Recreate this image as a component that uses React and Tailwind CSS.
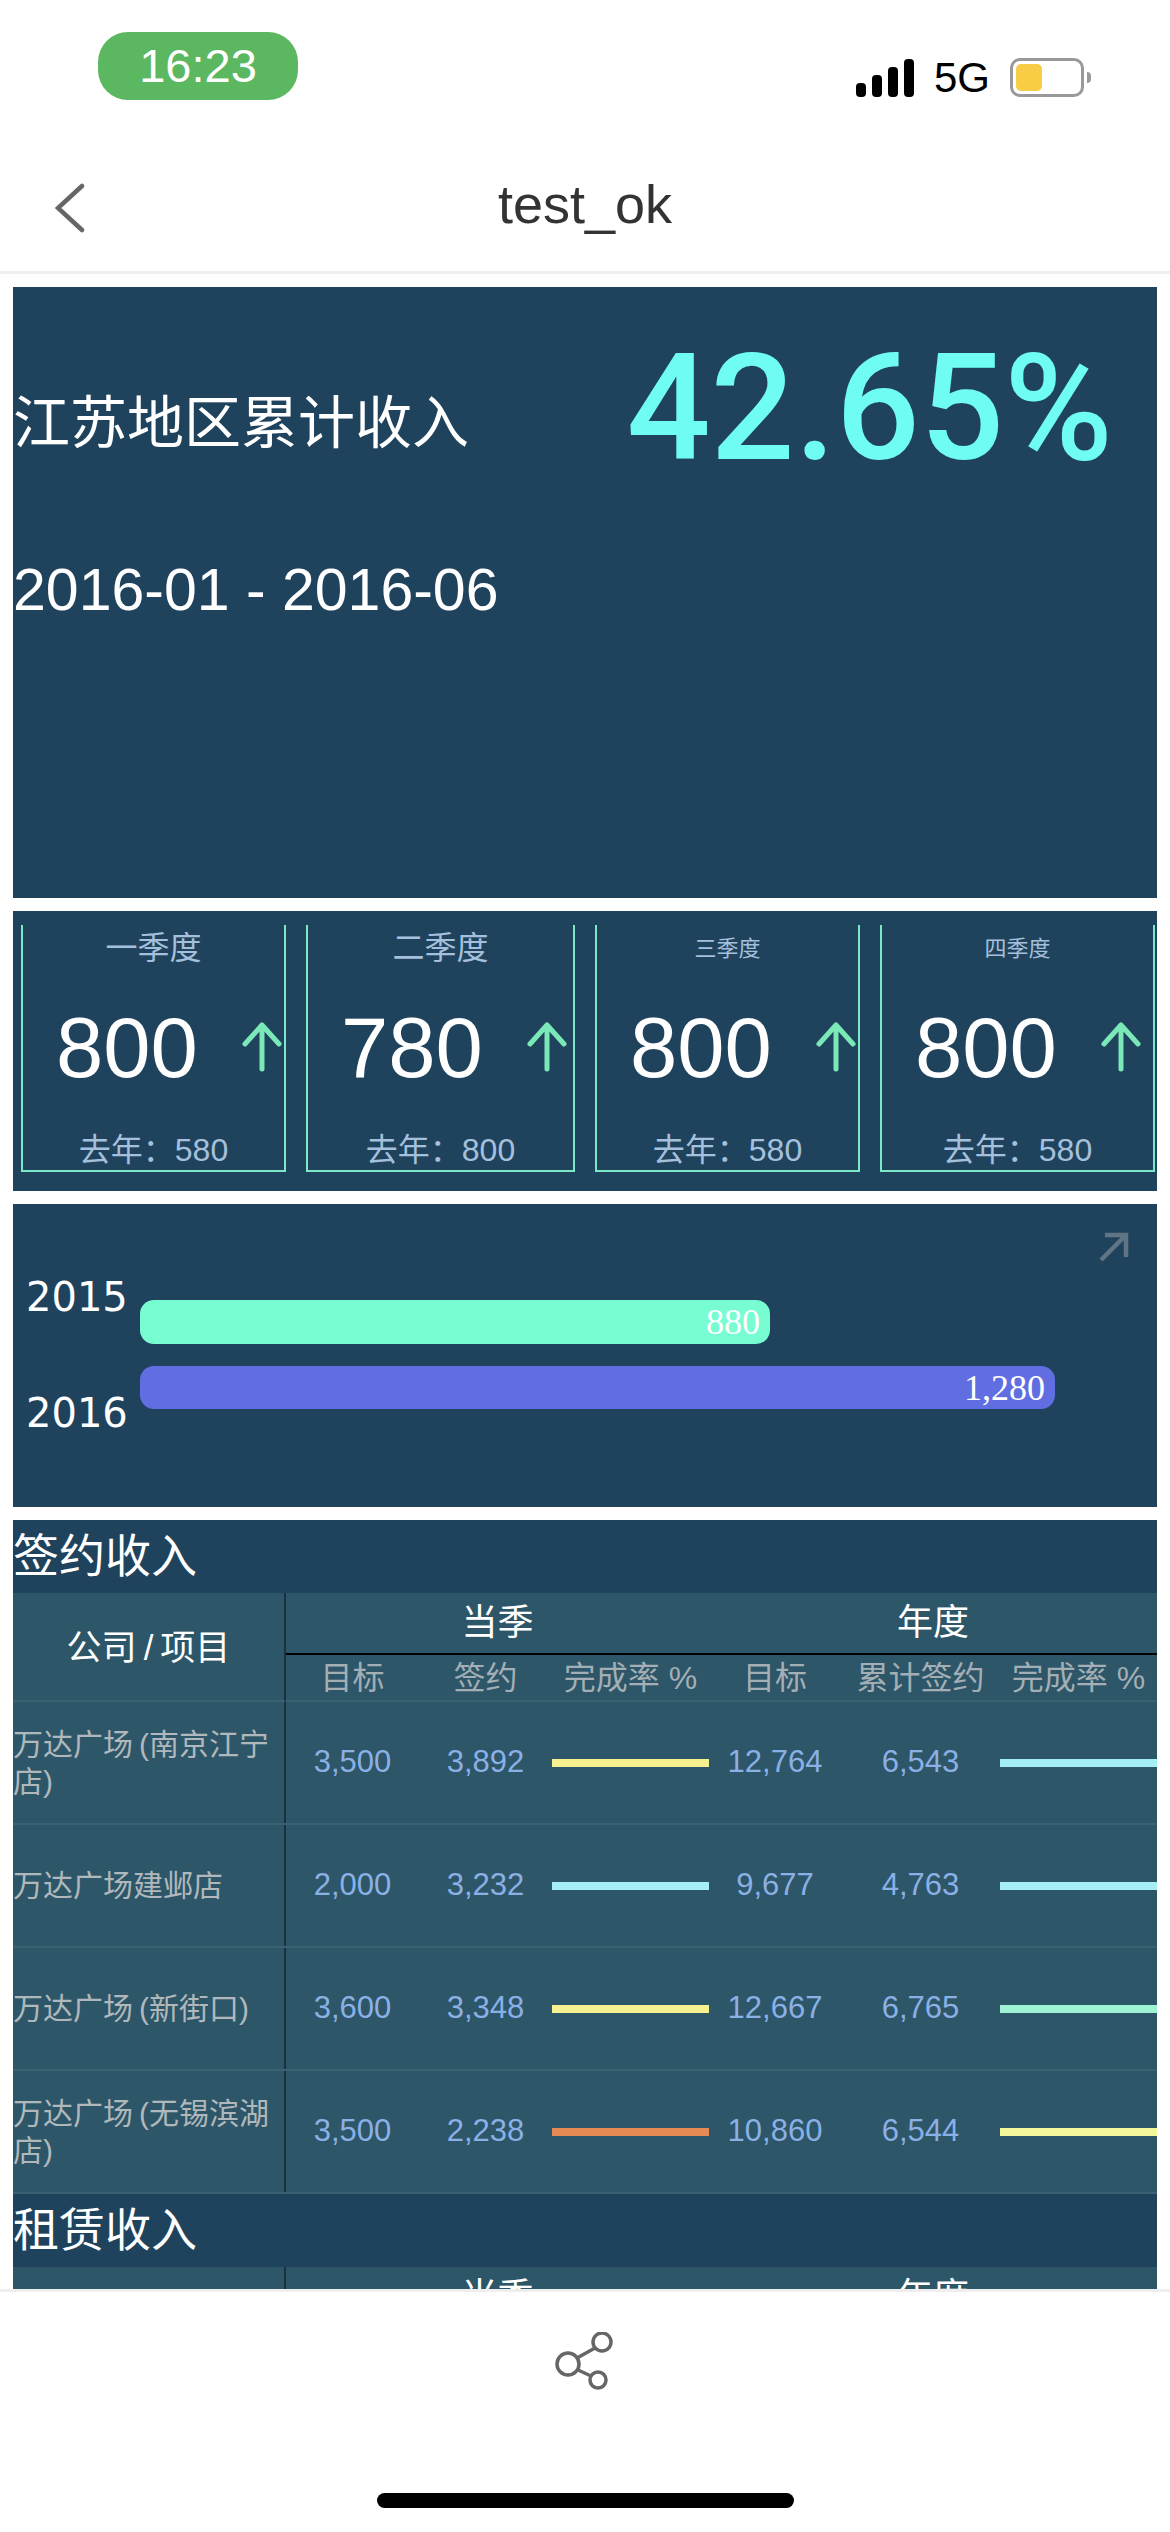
import React from 'react';

const cjk = 'font-["Liberation_Sans","Noto_Sans_CJK_SC",sans-serif]';

const quarters = [
    { name: '一季度', value: '800', last: '580', w: 'w-[265px]', small: false },
    { name: '二季度', value: '780', last: '800', w: 'w-[269px]', small: false },
    { name: '三季度', value: '800', last: '580', w: 'w-[265px]', small: true },
    { name: '四季度', value: '800', last: '580', w: 'w-[275px]', small: true },
];

const rows = [
    { name: '万达广场\u2009(南京江宁店)', a: '3,500', b: '3,892', barA: 'bg-[#f7f08f]', c: '12,764', d: '6,543', barB: 'bg-[#a5eef5]' },
    { name: '万达广场建邺店', a: '2,000', b: '3,232', barA: 'bg-[#a5eef5]', c: '9,677', d: '4,763', barB: 'bg-[#a5eef5]' },
    { name: '万达广场\u2009(新街口)', a: '3,600', b: '3,348', barA: 'bg-[#f7f08f]', c: '12,667', d: '6,765', barB: 'bg-[#a0f2d4]' },
    { name: '万达广场\u2009(无锡滨湖店)', a: '3,500', b: '2,238', barA: 'bg-[#e68a55]', c: '10,860', d: '6,544', barB: 'bg-[#f2f79a]' },
];

const gridCols = 'grid grid-cols-[273px_133px_133px_157px_132px_159px_157px]';

const TableHead = () => (
    <div className={`${gridCols} h-[109px] bg-[#2d5668]`}>
        <div className="row-span-2 flex items-center justify-center border-r-2 border-[#1c3140] border-b-2 border-b-[#3a6072] pt-[3px] text-[35px] text-white">
            公司<span className="mx-[7px]">/</span>项目
        </div>
        <div className="col-span-3 flex h-[62px] items-center justify-center border-b-2 border-black text-[36px] text-white">当季</div>
        <div className="col-span-3 flex h-[62px] items-center justify-center border-b-2 border-black text-[36px] text-white">年度</div>
        {['目标', '签约', '完成率 %', '目标', '累计签约', '完成率 %'].map((h, i) => (
            <div key={i} className="flex h-[47px] items-center justify-center border-b-2 border-[#3a6072] text-[32px] whitespace-nowrap text-[#a3aeb5]">
                {h}
            </div>
        ))}
    </div>
);

const SectionTitle = ({ children }) => (
    <div className="flex h-[73px] items-center text-[46px] text-white">{children}</div>
);

const UpArrow = () => (
    <svg width="40" height="50" viewBox="0 0 40 50" fill="none" stroke="#7be8b8" strokeWidth="5" strokeLinecap="round" strokeLinejoin="round">
        <path d="M20 47V3M3 22L20 3L37 22" />
    </svg>
);

export default function App() {
    return (
        <div className={`relative h-[2532px] w-[1170px] overflow-hidden bg-white ${cjk}`}>
            {/* status bar */}
            <div className="flex h-[150px] items-start pt-[32px] pr-[79px] pl-[98px]">
                <div className="flex h-[68px] w-[200px] items-center justify-center rounded-[30px] bg-[#5cb860] text-[47px] text-white">
                    16:23
                </div>
                <div className="mt-[26px] ml-auto flex items-center">
                    <svg width="58" height="38" viewBox="0 0 58 38">
                        <rect x="0" y="24" width="10" height="14" rx="4" fill="#000" />
                        <rect x="16" y="16" width="10" height="22" rx="4" fill="#000" />
                        <rect x="32" y="8" width="10" height="30" rx="4" fill="#000" />
                        <rect x="48" y="0" width="10" height="38" rx="4" fill="#000" />
                    </svg>
                    <span className="ml-[20px] text-[42px] leading-[38px] text-black">5G</span>
                    <div className="ml-[20px] h-[39px] w-[74px] rounded-[10px] border-[3px] border-[#999] p-[3px]">
                        <div className="h-full w-[26px] rounded-[5px] bg-[#f8cd45]" />
                    </div>
                    <div className="ml-[3px] h-[11px] w-[4px] rounded-r-full bg-[#999]" />
                </div>
            </div>

            {/* nav */}
            <div className="grid h-[124px] grid-cols-[1fr_auto_1fr] items-center border-b-[3px] border-[#eeeeee] pb-[6px] pl-[55px]">
                <svg width="30" height="50" viewBox="0 0 30 50" fill="none" stroke="#666" strokeWidth="4.5" strokeLinecap="round">
                    <path d="M27 3L3 25L27 47" />
                </svg>
                <span className="-mt-[8px] -ml-[55px] text-[54px] leading-[62px] text-[#333]">test_ok</span>
            </div>

            <div className="mx-[13px] mt-[13px] flex flex-col gap-[13px]">
                {/* headline */}
                <div className="flex h-[611px] items-start justify-between bg-[#20435d] pr-[44px] text-white">
                    <div className="flex flex-col gap-[103px] pt-[104px]">
                        <div className="text-[57px] leading-[64px]">江苏地区累计收入</div>
                        <div className="text-[59px] leading-[64px]">2016-01 - 2016-06</div>
                    </div>
                    <div className="pt-[48px] font-['Roboto'] text-[148px] leading-[148px] font-medium text-[#6ffcf2]">42.65%</div>
                </div>

                {/* quarters */}
                <div className="flex h-[280px] gap-[20px] bg-[#20435d] pt-[14px] pl-[8px]">
                    {quarters.map((q) => (
                        <div key={q.name} className={`flex h-[247px] flex-col items-center border-x-2 border-b-2 border-[#7be8c8] ${q.w}`}>
                            <div className={`flex h-[46px] items-center text-[#a5c0dc] ${q.small ? 'text-[22px]' : 'text-[32px]'}`}>{q.name}</div>
                            <div className="flex h-[152px] w-full items-center pl-[33px]">
                                <span className="w-[186px] text-[85px] leading-none text-white">{q.value}</span>
                                <UpArrow />
                            </div>
                            <div className="flex h-[47px] items-center pt-[7px] text-[32px] text-[#a5c0dc]">去年：{q.last}</div>
                        </div>
                    ))}
                </div>

                {/* bars */}
                <div className="relative flex h-[303px] bg-[#20435d] pt-[69px]">
                    <svg className="absolute top-[27px] right-[27px]" width="32" height="32" viewBox="0 0 32 32" fill="none" stroke="#5f7484" strokeWidth="4.5">
                        <path d="M3 29L28 4M7 4H28V26" />
                    </svg>
                    <div className="flex w-[127px] flex-col gap-[68px] pl-[13px] font-['DejaVu_Sans'] text-[40px] leading-[48px] text-white">
                        <div>2015</div>
                        <div>2016</div>
                    </div>
                    <div className="flex flex-col gap-[22px] pt-[27px] font-['Liberation_Serif'] text-[36px] text-white">
                        <div className="flex h-[44px] w-[630px] items-center justify-end rounded-[14px] bg-[#78fdd2] pr-[10px]">880</div>
                        <div className="flex h-[43px] w-[915px] items-center justify-end rounded-[14px] bg-[#606ee2] pr-[10px]">1,280</div>
                    </div>
                </div>

                {/* tables */}
                <div className="bg-[#20435d]">
                    <SectionTitle>签约收入</SectionTitle>
                    <TableHead />
                    {rows.map((r) => (
                        <div key={r.name} className={`${gridCols} h-[123px] items-center border-b-2 border-[#3a6072] bg-[#2d5668] text-[31px] text-[#8bb0e6]`}>
                            <div className="flex h-full items-center border-r-2 border-[#1c3140] pr-[8px] text-[30px] leading-[37px] text-[#b0b8bc]">{r.name}</div>
                            <div className="text-center">{r.a}</div>
                            <div className="text-center">{r.b}</div>
                            <div className={`h-[8px] ${r.barA}`} />
                            <div className="text-center">{r.c}</div>
                            <div className="text-center">{r.d}</div>
                            <div className={`h-[8px] ${r.barB}`} />
                        </div>
                    ))}
                    <SectionTitle>租赁收入</SectionTitle>
                    <TableHead />
                </div>
            </div>

            {/* footer sits over the scrolling content */}
            <div className="absolute top-[2289px] left-0 flex h-[243px] w-full flex-col items-center border-t-[3px] border-[#eeeeee] bg-white pt-[40px]">
                <svg width="60" height="60" viewBox="0 0 60 60" fill="none" stroke="#666" strokeWidth="3.5">
                    <circle cx="47" cy="10" r="9" />
                    <circle cx="13" cy="32" r="11" />
                    <circle cx="43" cy="48" r="8" />
                    <path d="M40 16L22 26M23 38L36 44" />
                </svg>
                <div className="mt-[101px] h-[15px] w-[417px] rounded-full bg-black" />
            </div>
        </div>
    );
}
